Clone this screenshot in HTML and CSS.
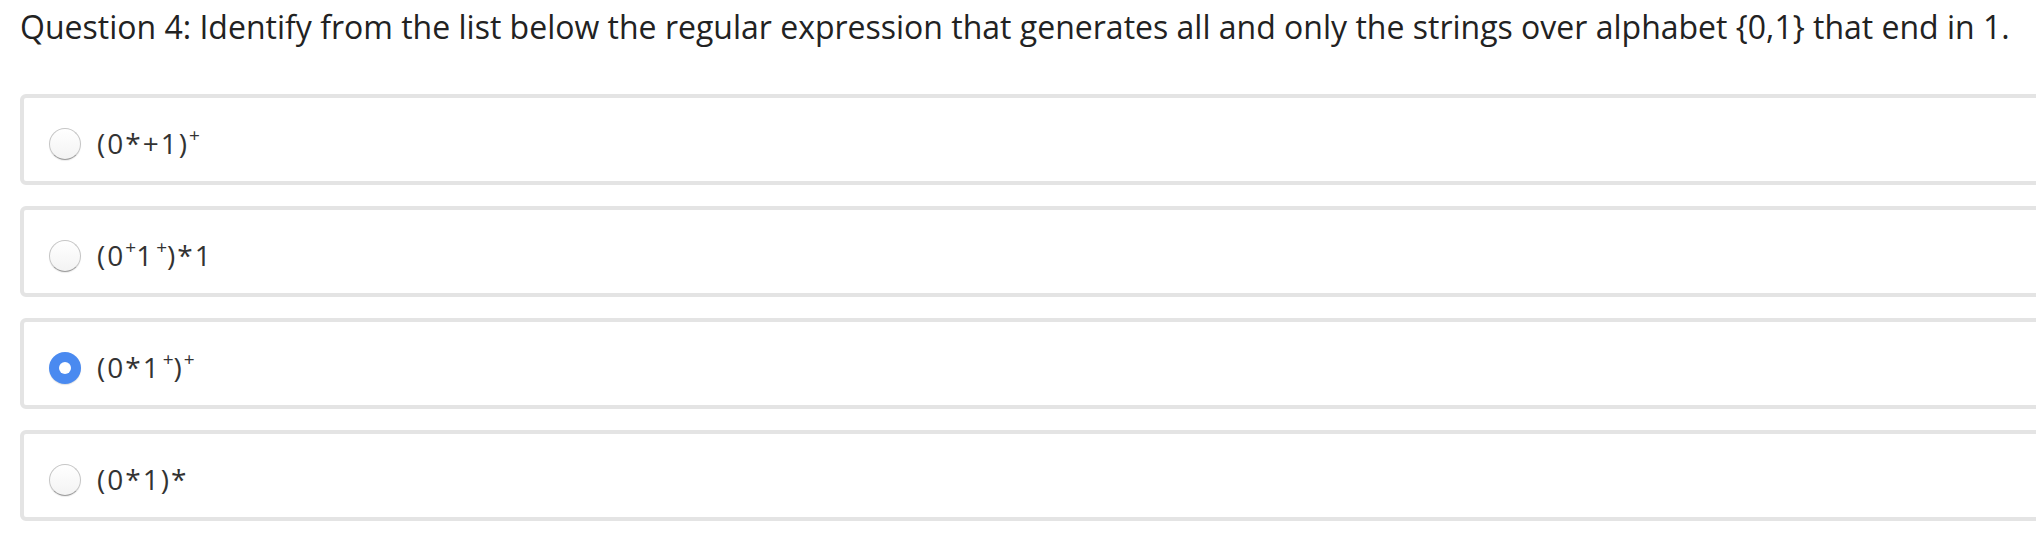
FILE: index.html
```html
<!DOCTYPE html>
<html lang="en">
<head>
<meta charset="utf-8">
<title>Question 4</title>
<link rel="stylesheet" href="styles.css">
</head>
<body>
<div class="page">
  <p class="question">Question 4: Identify from the list below the regular expression that generates all and only the strings over alphabet {0,1} that end in 1.</p>
  <ul class="options">
    <li class="option"><span class="radio"></span><span class="label">(0*+1)<sup>+</sup></span></li>
    <li class="option"><span class="radio"></span><span class="label">(0<sup>+</sup>1<sup class="sp">+</sup>)*1</span></li>
    <li class="option"><span class="radio checked"></span><span class="label">(0*1<sup class="sp">+</sup>)<sup>+</sup></span></li>
    <li class="option"><span class="radio"></span><span class="label">(0*1)*</span></li>
  </ul>
</div>
</body>
</html>
```
FILE: styles.css
```css
html, body {
  margin: 0;
  padding: 0;
  background: #ffffff;
  overflow: hidden;
}

.page {
  font-family: "Open Sans", "Noto Sans", sans-serif;
  color: #333333;
}

.question {
  margin: 0;
  padding: 5px 0 0 20px;
  font-size: 32px;
  line-height: 44px;
  color: #222222;
  white-space: nowrap;
}

.options {
  list-style: none;
  margin: 45px -40px 0 20px;
  padding: 0;
  display: flex;
  flex-direction: column;
  gap: 21px;
}

.option {
  box-sizing: border-box;
  height: 91px;
  border: 4px solid #e4e4e4;
  border-radius: 6px;
  display: flex;
  align-items: center;
  padding: 6px 0 0 25px;
  gap: 16px;
}

.radio {
  box-sizing: border-box;
  width: 32px;
  height: 32px;
  border-radius: 50%;
  border: 1px solid #c6c6c6;
  border-bottom-color: #9e9e9e;
  background: linear-gradient(#ffffff, #f3f3f3);
  box-shadow: 0 1px 1px rgba(0, 0, 0, 0.08);
  flex: none;
  margin-top: 2px;
  display: flex;
  align-items: center;
  justify-content: center;
}

.radio.checked {
  border: none;
  background: #4a8af0;
  box-shadow: 0 1px 1px rgba(0, 0, 0, 0.12);
}

.radio.checked::after {
  content: "";
  width: 12px;
  height: 12px;
  border-radius: 50%;
  background: #ffffff;
}

.label {
  font-size: 28px;
  line-height: 38px;
  letter-spacing: 2px;
  color: #333333;
}

.label sup {
  font-size: 19px;
  line-height: 0;
  letter-spacing: 0;
  vertical-align: 12px;
}

.label sup.sp {
  margin-left: 2px;
}
```
